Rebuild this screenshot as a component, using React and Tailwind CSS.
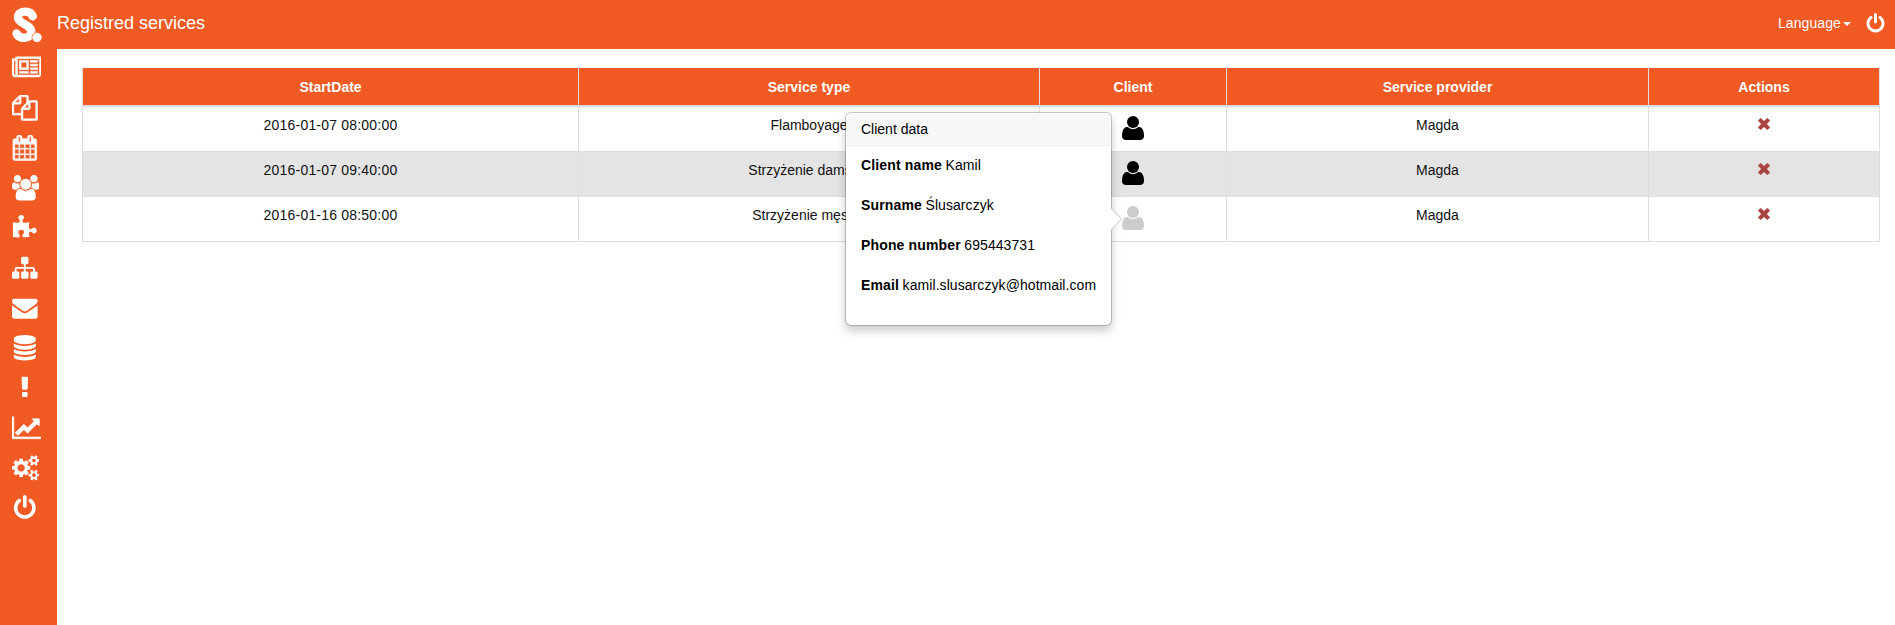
const PATHS = {
  newspaper: [2048, 'M1024 512h-384v384h384v-384zm128 640v128h-640v-128h640zm0-768v640h-640v-640h640zm640 768v128h-512v-128h512zm0-256v128h-512v-128h512zm0-256v128h-512v-128h512zm0-256v128h-512v-128h512zm-1536 960v-960h-128v960q0 26 19 45t45 19 45-19 19-45zm1664 0v-1088h-1536v1088q0 33-11 64h1483q26 0 45-19t19-45zm128-1216v1216q0 80-56 136t-136 56h-1664q-80 0-136-56t-56-136v-1088h256v-128h1792z'],
  files: [1792, 'M1696 384q40 0 68 28t28 68v1216q0 40-28 68t-68 28h-960q-40 0-68-28t-28-68v-288h-544q-40 0-68-28t-28-68v-672q0-40 20-88t48-76l408-408q28-28 76-48t88-20h416q40 0 68 28t28 68v328q68-40 128-40h416zm-544 213l-299 299h299v-299zm-640-384l-299 299h299v-299zm196 647l316-316v-416h-384v416q0 40-28 68t-68 28h-416v640h512v-256q0-40 20-88t48-76zm956 804v-1152h-384v416q0 40-28 68t-68 28h-416v640h896z'],
  calendar: [1792, 'M192 1664h288v-288h-288v288zm352 0h320v-288h-320v288zm-352-352h288v-320h-288v320zm352 0h320v-320h-320v320zm-352-384h288v-288h-288v288zm736 736h320v-288h-320v288zm-384-736h320v-288h-320v288zm768 736h288v-288h-288v288zm-384-352h320v-320h-320v320zm-352-864v-288q0-13-9.5-22.5t-22.5-9.5h-64q-13 0-22.5 9.5t-9.5 22.5v288q0 13 9.5 22.5t22.5 9.5h64q13 0 22.5-9.5t9.5-22.5zm736 864h288v-320h-288v320zm-384-384h320v-288h-320v288zm384 0h288v-288h-288v288zm32-480v-288q0-13-9.5-22.5t-22.5-9.5h-64q-13 0-22.5 9.5t-9.5 22.5v288q0 13 9.5 22.5t22.5 9.5h64q13 0 22.5-9.5t9.5-22.5zm384-64v1280q0 52-38 90t-90 38h-1408q-52 0-90-38t-38-90v-1280q0-52 38-90t90-38h128v-96q0-66 47-113t113-47h64q66 0 113 47t47 113v96h384v-96q0-66 47-113t113-47h64q66 0 113 47t47 113v96h128q52 0 90 38t38 90z'],
  users: [1920, 'M593 896q-162 5-265 128h-134q-82 0-138-40.5t-56-118.5q0-353 124-353 6 0 43.5 21t97.5 42.5 119 21.5q67 0 133-23-5 37-5 66 0 139 81 256zm1071 637q0 120-73 189.5t-194 69.5h-874q-121 0-194-69.5t-73-189.5q0-53 3.5-103.5t14-109 26.5-108.5 43-97.5 62-81 85.5-53.5 111.5-20q10 0 43 21.5t73 48 107 48 135 21.5 135-21.5 107-48 73-48 43-21.5q61 0 111.5 20t85.5 53.5 62 81 43 97.5 26.5 108.5 14 109 3.5 103.5zm-1024-1277q0 106-75 181t-181 75-181-75-75-181 75-181 181-75 181 75 75 181zm704 384q0 159-112.5 271.5t-271.5 112.5-271.5-112.5-112.5-271.5 112.5-271.5 271.5-112.5 271.5 112.5 112.5 271.5zm576 225q0 78-56 118.5t-138 40.5h-134q-103-123-265-128 81-117 81-256 0-29-5-66 66 23 133 23 59 0 119-21.5t97.5-42.5 43.5-21q124 0 124 353zm-128-609q0 106-75 181t-181 75-181-75-75-181 75-181 181-75 181 75 75 181z'],
  puzzle: [1792, 'M1728 1098q0 81-44.5 135t-123.5 54q-41 0-77.5-17.5t-59-38-56.5-38-71-17.5q-110 0-110 124 0 39 16 115t15 115v5q-22 0-33 1-34 3-97.5 11.5t-115.5 13.5-98 5q-61 0-103-26.5t-42-83.5q0-37 17.5-71t38-56.5 38-59 17.5-77.5q0-79-54-123.5t-135-44.5q-84 0-143 45.5t-59 127.5q0 43 15 83t33.5 64.5 33.5 53 15 50.5q0 45-46 89-37 35-117 35-95 0-245-24-9-2-27.5-4t-27.5-4l-13-2q-1 0-3-1-2 0-2-1v-1024q2 1 17.5 3.5t34 5 21.5 3.5q150 24 245 24 80 0 117-35 46-44 46-89 0-22-15-50.5t-33.5-53-33.5-64.5-15-83q0-82 59-127.5t144-45.5q80 0 134 44.5t54 123.5q0 41-17.5 77.5t-38 59-38 56.5-17.5 71q0 57 42 83.5t103 26.5q64 0 180-15t163-17v2q-1 2-3.5 17.5t-5 34-3.5 21.5q-24 150-24 245 0 80 35 117 44 46 89 46 22 0 50.5-15t53-33.5 64.5-33.5 83-15q82 0 127.5 59t45.5 143z'],
  sitemap: [1792, 'M1792 1248v320q0 40-28 68t-68 28h-320q-40 0-68-28t-28-68v-320q0-40 28-68t68-28h96v-192h-512v192h96q40 0 68 28t28 68v320q0 40-28 68t-68 28h-320q-40 0-68-28t-28-68v-320q0-40 28-68t68-28h96v-192h-512v192h96q40 0 68 28t28 68v320q0 40-28 68t-68 28h-320q-40 0-68-28t-28-68v-320q0-40 28-68t68-28h96v-192q0-52 38-90t90-38h512v-192h-96q-40 0-68-28t-28-68v-320q0-40 28-68t68-28h320q40 0 68 28t28 68v320q0 40-28 68t-68 28h-96v192h512q52 0 90 38t38 90v192h96q40 0 68 28t28 68z'],
  envelope: [1792, 'M1792 710v794q0 66-47 113t-113 47h-1472q-66 0-113-47t-47-113v-794q44 49 101 87 362 246 497 345 57 42 92.5 65.5t94.5 48 110 24.5h2q51 0 110-24.5t94.5-48 92.5-65.5q170-123 498-345 57-39 100-87zm0-294q0 79-49 151t-122 123q-376 261-468 325-10 7-42.5 30.5t-54 38-52 32.5-57.5 27-50 9h-2q-23 0-50-9t-57.5-27-52-32.5-54-38-42.5-30.5q-91-64-262-182.5t-205-142.5q-62-42-117-115.5t-55-136.5q0-78 41.5-130t118.5-52h1472q65 0 112.5 47t47.5 113z'],
  database: [1792, 'M896 768q237 0 443-43t325-127v170q0 69-103 128t-280 93.5-385 34.5-385-34.5-280-93.5-103-128v-170q119 84 325 127t443 43zm0 768q237 0 443-43t325-127v170q0 69-103 128t-280 93.5-385 34.5-385-34.5-280-93.5-103-128v-170q119 84 325 127t443 43zm0-384q237 0 443-43t325-127v170q0 69-103 128t-280 93.5-385 34.5-385-34.5-280-93.5-103-128v-170q119 84 325 127t443 43zm0-1152q208 0 385 34.5t280 93.5 103 128v128q0 69-103 128t-280 93.5-385 34.5-385-34.5-280-93.5-103-128v-128q0-69 103-128t280-93.5 385-34.5z'],
  exclamation: [1792, 'M1088 1248v224q0 26-19 45t-45 19h-256q-26 0-45-19t-19-45v-224q0-26 19-45t45-19h256q26 0 45 19t19 45zm30-1056l-28 768q-1 26-20.5 45t-45.5 19h-256q-26 0-45.5-19t-20.5-45l-28-768q-1-26 17.5-45t44.5-19h320q26 0 44.5 19t17.5 45z'],
  chart: [2048, 'M2048 1536v128h-2048v-1536h128v1408h1920zm-128-1248v435q0 21-19.5 29.5t-35.5-7.5l-121-121-633 633q-10 10-23 10t-23-10l-233-233-416 416-192-192 585-585q10-10 23-10t23 10l233 233 464-464-121-121q-16-16-7.5-35.5t29.5-19.5h435q14 0 23 9t9 23z'],
  cogs: [1920, 'M896 896q0-106-75-181t-181-75-181 75-75 181 75 181 181 75 181-75 75-181zm768 512q0-52-38-90t-90-38-90 38-38 90q0 53 37.5 90.5t90.5 37.5 90.5-37.5 37.5-90.5zm0-1024q0-52-38-90t-90-38-90 38-38 90q0 53 37.5 90.5t90.5 37.5 90.5-37.5 37.5-90.5zm-384 421v185q0 10-7 19.5t-16 10.5l-155 24q-11 35-32 76 34 48 90 115 7 11 7 20 0 12-7 19-23 30-82.5 89.5t-78.5 59.5q-11 0-21-7l-115-90q-37 19-77 31-11 108-23 155-7 24-30 24h-186q-11 0-20-7.5t-10-17.5l-23-153q-34-10-75-31l-118 89q-7 7-20 7-11 0-21-8-144-133-144-160 0-9 7-19 10-14 41-53t47-61q-23-44-35-82l-152-24q-10-1-17-9.5t-7-19.5v-185q0-10 7-19.5t16-10.5l155-24q11-35 32-76-34-48-90-115-7-11-7-20 0-12 7-20 22-30 82-89t79-59q11 0 21 7l115 90q34-18 77-32 11-108 23-154 7-24 30-24h186q11 0 20 7.5t10 17.5l23 153q34 10 75 31l118-89q8-7 20-7 11 0 21 8 144 133 144 160 0 8-7 19-12 16-42 54t-45 60q23 48 34 82l152 23q10 2 17 10.5t7 19.5zm640 533v140q0 16-149 31-12 27-30 52 51 113 51 138 0 4-4 7-122 71-124 71-8 0-46-47t-52-68q-20 2-30 2t-30-2q-14 21-52 68t-46 47q-2 0-124-71-4-3-4-7 0-25 51-138-18-25-30-52-149-15-149-31v-140q0-16 149-31 13-29 30-52-51-113-51-138 0-4 4-7 4-2 35-20t59-34 30-16q8 0 46 46.5t52 67.5q20-2 30-2t30 2q51-71 92-112l6-2q4 0 124 70 4 3 4 7 0 25-51 138 17 23 30 52 149 15 149 31zm0-1024v140q0 16-149 31-12 27-30 52 51 113 51 138 0 4-4 7-122 71-124 71-8 0-46-47t-52-68q-20 2-30 2t-30-2q-14 21-52 68t-46 47q-2 0-124-71-4-3-4-7 0-25 51-138-18-25-30-52-149-15-149-31v-140q0-16 149-31 13-29 30-52-51-113-51-138 0-4 4-7 4-2 35-20t59-34 30-16q8 0 46 46.5t52 67.5q20-2 30-2t30 2q51-71 92-112l6-2q4 0 124 70 4 3 4 7 0 25-51 138 17 23 30 52 149 15 149 31z'],
  power: [1792, 'M1664 896q0 156-61 298t-164 245-245 164-298 61-298-61-245-164-164-245-61-298q0-182 80.5-343t226.5-270q43-32 95.5-25t83.5 50q32 42 24.5 94.5t-49.5 84.5q-98 74-151.5 181t-53.5 228q0 104 40.5 198.5t109.5 163.5 163.5 109.5 198.5 40.5 198.5-40.5 163.5-109.5 109.5-163.5 40.5-198.5q0-121-53.5-228t-151.5-181q-42-32-49.5-84.5t24.5-94.5q31-43 84-50t95 25q146 109 226.5 270t80.5 343zm-640-768v640q0 52-38 90t-90 38-90-38-38-90v-640q0-52 38-90t90-38 90 38 38 90z'],
};

const MENU = ['newspaper', 'files', 'calendar', 'users', 'puzzle', 'sitemap', 'envelope', 'database', 'exclamation', 'chart', 'cogs', 'power'];

// These glyphs are built from thin lines and get a slightly heavier weight.
const THIN = ['newspaper', 'files', 'calendar', 'chart'];

function Icon({ name, className }) {
  const [width, d] = PATHS[name];
  return (
    <svg viewBox={`0 0 ${width} 1792`} className={className} fill="currentColor" stroke="currentColor" strokeWidth={THIN.includes(name) ? 36 : 0}>
      <path d={d} />
    </svg>
  );
}

function UserIcon({ className }) {
  return (
    <svg viewBox="256 256 1408 1536" className={className} fill="currentColor">
      <path d="M1664 1533q0 120-73 189.5t-194 69.5h-874q-121 0-194-69.5t-73-189.5q0-53 3.5-103.5t14-109 26.5-108.5 43-97.5 62-81 85.5-53.5 111.5-20q10 0 43 21.5t73 48 107 48 135 21.5 135-21.5 107-48 73-48 43-21.5q61 0 111.5 20t85.5 53.5 62 81 43 97.5 26.5 108.5 14 109 3.5 103.5z" />
      <circle cx="960" cy="640" r="384" />
    </svg>
  );
}

function RemoveIcon() {
  return (
    <svg viewBox="0 0 12 12" className="mt-[11px] h-3 w-3 text-[#a94442]" fill="currentColor">
      <path d="M2.800 0 6 3 9.200 0l1.300.900.600.600.900 1.300L8.900 6l3.100 3.200-.9 1.300-.6.6-1.300.9L6 9l-3.200 3-1.300-.9-.6-.6L0 9.200 3.100 6 0 2.800l.9-1.300.6-.6z" />
    </svg>
  );
}

function Logo() {
  return (
    <svg viewBox="0 0 30 36" className="h-9 w-[30px]" fill="none">
      <path d="M20.700 9.300C19.500 6 16.500 4.500 13 4.600C8.500 4.700 5.700 7.300 6 10.800C6.500 16.500 19 17.500 19.200 24.500C19.300 28.500 16.300 30.800 12.500 30.800C8.800 30.800 5.600 29.300 4.600 26.500" stroke="white" strokeWidth="8.400" strokeLinecap="round" />
      <circle cx="25" cy="30.500" r="5.400" fill="#f15a23" />
      <circle cx="25" cy="30.500" r="4.700" fill="white" />
    </svg>
  );
}

const COLS = 'grid w-[1798px] grid-cols-[496px_461px_187px_422px_231px] border-l border-[#ddd]';

const HEADERS = ['StartDate', 'Service type', 'Client', 'Service provider', 'Actions'];

const ROWS = [
  { date: '2016-01-07 08:00:00', type: 'Flamboyage', provider: 'Magda' },
  { date: '2016-01-07 09:40:00', type: 'Strzyżenie damskie', provider: 'Magda', shaded: true },
  { date: '2016-01-16 08:50:00', type: 'Strzyżenie męskie', provider: 'Magda', active: true },
];

const CLIENT = [
  ['Client name', 'Kamil'],
  ['Surname', 'Ślusarczyk'],
  ['Phone number', '695443731'],
  ['Email', 'kamil.slusarczyk@hotmail.com'],
];

function Popover() {
  return (
    <div className="absolute top-[-94px] right-[32px] w-[267px] rounded-[6px] border border-black/20 bg-white bg-clip-padding p-px text-left text-black shadow-[0_5px_10px_rgba(0,0,0,0.2)]">
      <h3 className="rounded-t-[5px] border-b border-[#ebebeb] bg-[#f7f7f7] px-[14px] pt-[6px] pb-[7px] text-[14px] leading-[18px]">Client data</h3>
      <dl className="px-[14px] pt-[9px] pb-[9px]">
        {CLIENT.map(([label, value]) => (
          <div key={label} className="flex h-10 gap-[3.500px] whitespace-nowrap leading-5">
            <dt className="font-bold tracking-[0.150px]">{label}</dt>
            <dd className="tracking-[0.070px]">{value}</dd>
          </div>
        ))}
      </dl>
      <svg viewBox="0 0 11 22" className="absolute top-[95px] left-[265px] h-[22px] w-[11px]">
        <path d="M0 0.500 10.500 11 0 21.500z" fill="white" />
        <path d="M0.500 0.500 10.500 11 0.500 21.500" fill="none" stroke="#c4c4c4" />
      </svg>
    </div>
  );
}

export default function App() {
  return (
    <div className="flex h-[625px] w-[1895px] overflow-hidden bg-white font-['Liberation_Sans',Arial,sans-serif] text-[14px] leading-5 text-[#111]">
      <aside className="w-[57px] shrink-0 bg-[#f15a23] pl-3 text-white">
        <div className="pt-[6.500px]">
          <Logo />
        </div>
        <nav className="mt-[12.700px] flex flex-col gap-[14.400px]">
          {MENU.map((name) => (
            <Icon key={name} name={name} className="h-[25.600px] w-auto self-start" />
          ))}
        </nav>
      </aside>
      <div className="min-w-0 flex-1">
        <header className="flex h-[49px] items-center justify-between bg-[#f15a23] pr-[9px] text-white">
          <h1 className="pb-[3px] text-[18px] leading-5">Registred services</h1>
          <div className="flex items-center pb-[3px]">
            <span className="tracking-[0.1px]">Language</span>
            <span className="mt-px ml-[2px] border-x-4 border-t-4 border-x-transparent border-t-white" />
            <Icon name="power" className="ml-[14px] h-[21px] w-[21px]" />
          </div>
        </header>
        <main className="pt-[19px] pl-[25px]">
          <div className={`${COLS} h-[39px] border-b-2 text-center font-bold text-white`}>
            {HEADERS.map((label) => (
              <div key={label} className="border-r border-[#ddd] bg-[#f15a23] pt-[9px]">{label}</div>
            ))}
          </div>
          {ROWS.map((row) => (
            <div key={row.date} className={`${COLS} h-[45px] border-b text-center ${row.shaded ? 'bg-[#e4e4e4]' : 'bg-white'}`}>
              <div className="border-r border-[#ddd] pt-2 tracking-[0.2px]">{row.date}</div>
              <div className="border-r border-[#ddd] pt-2">{row.type}</div>
              <div className="flex justify-center border-r border-[#ddd] pt-[9px]">
                <div className="relative h-6 w-[22px]">
                  <UserIcon className={`h-6 w-[22px] ${row.active ? 'text-[#ccc]' : 'text-black'}`} />
                  {row.active && <Popover />}
                </div>
              </div>
              <div className="border-r border-[#ddd] pt-2">{row.provider}</div>
              <div className="flex justify-center border-r border-[#ddd]">
                <RemoveIcon />
              </div>
            </div>
          ))}
        </main>
      </div>
    </div>
  );
}
